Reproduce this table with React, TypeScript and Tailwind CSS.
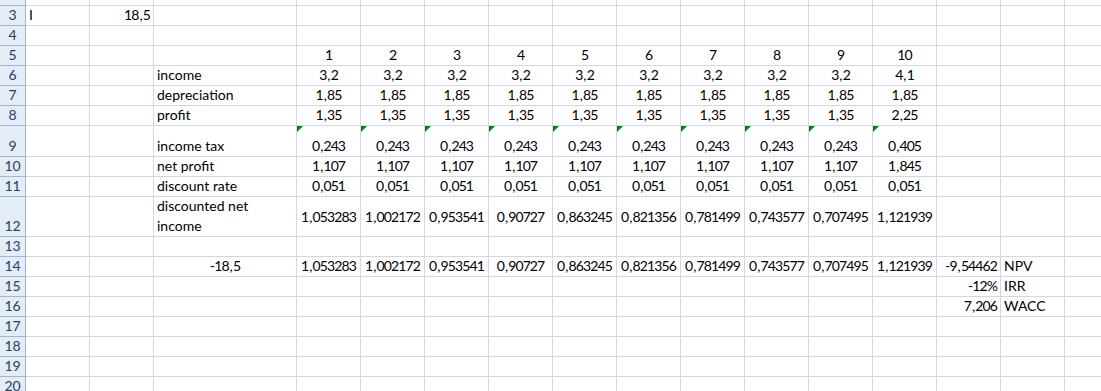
import React from "react";

// Spreadsheet view: rows 2–20, columns A–P, scrolled so row 2 is mostly hidden.

type Align = "l" | "c" | "r";
type VAlign = "b" | "m";

interface CellData {
  t: string;
  a?: Align;
  v?: VAlign;
  tri?: boolean;
  wrap?: boolean;
}

const COL_W = [
  "w-[64px]", "w-[64px]", "w-[143px]",
  "w-[64px]", "w-[64px]", "w-[64px]", "w-[64px]", "w-[64px]", "w-[64px]", "w-[64px]",
  "w-[64px]", "w-[64px]", "w-[64px]", "w-[64px]", "w-[64px]", "w-[64px]",
];

const D = 3; // column D index

const discounted = [
  "1,053283", "1,002172", "0,953541", "0,90727", "0,863245",
  "0,821356", "0,781499", "0,743577", "0,707495", "1,121939",
];

function series(values: string[], extra?: Partial<CellData>): Record<number, CellData> {
  const out: Record<number, CellData> = {};
  values.forEach((t, i) => {
    out[D + i] = { t, a: "c", ...extra };
  });
  return out;
}

function rep(v: string, n: number) {
  return Array.from({ length: n }, () => v);
}

const ROWS: { n: number; h: string; cells: Record<number, CellData> }[] = [
  { n: 2, h: "h-[20px]", cells: {} },
  { n: 3, h: "h-[20px]", cells: { 0: { t: "I", a: "l" }, 1: { t: "18,5", a: "r" } } },
  { n: 4, h: "h-[20px]", cells: {} },
  { n: 5, h: "h-[20px]", cells: series(["1", "2", "3", "4", "5", "6", "7", "8", "9", "10"]) },
  { n: 6, h: "h-[20px]", cells: { 2: { t: "income" }, ...series([...rep("3,2", 9), "4,1"]) } },
  { n: 7, h: "h-[20px]", cells: { 2: { t: "depreciation" }, ...series(rep("1,85", 10)) } },
  { n: 8, h: "h-[20px]", cells: { 2: { t: "profit" }, ...series([...rep("1,35", 9), "2,25"]) } },
  {
    n: 9,
    h: "h-[31px]",
    cells: { 2: { t: "income tax" }, ...series([...rep("0,243", 9), "0,405"], { tri: true }) },
  },
  { n: 10, h: "h-[20px]", cells: { 2: { t: "net profit" }, ...series([...rep("1,107", 9), "1,845"]) } },
  { n: 11, h: "h-[20px]", cells: { 2: { t: "discount rate" }, ...series(rep("0,051", 10)) } },
  {
    n: 12,
    h: "h-[40px]",
    cells: { 2: { t: "discounted net income", wrap: true }, ...series(discounted, { v: "m" }) },
  },
  { n: 13, h: "h-[20px]", cells: {} },
  {
    n: 14,
    h: "h-[20px]",
    cells: {
      2: { t: "-18,5", a: "c" },
      ...series(discounted),
      13: { t: "-9,54462", a: "r" },
      14: { t: "NPV" },
    },
  },
  { n: 15, h: "h-[20px]", cells: { 13: { t: "-12%", a: "r" }, 14: { t: "IRR" } } },
  { n: 16, h: "h-[20px]", cells: { 13: { t: "7,206", a: "r" }, 14: { t: "WACC" } } },
  { n: 17, h: "h-[20px]", cells: {} },
  { n: 18, h: "h-[20px]", cells: {} },
  { n: 19, h: "h-[20px]", cells: {} },
  { n: 20, h: "h-[20px]", cells: {} },
];

const isNumber = (t: string) => /^[-\d,%]+$/.test(t);

// Calibri digits are narrower than Lato's: tighten digits, keep the comma airy.
function NumText({ t }: { t: string }) {
  const parts = t.split(",");
  return (
    <span className="tracking-[-0.9px]">
      {parts.map((p, i) => (
        <React.Fragment key={i}>
          {i > 0 && <span className="ml-[1px] mr-[1px]">,</span>}
          {p}
        </React.Fragment>
      ))}
    </span>
  );
}

function Cell({ w, data }: { w: string; data?: CellData }) {
  const align = data?.a ?? "l";
  const v = data?.v ?? "b";
  return (
    <div
      className={`relative shrink-0 ${w} h-full border-r border-b border-[#d0d7e5] flex ${
        v === "m" ? "items-center" : "items-end"
      } ${align === "c" ? "justify-center" : align === "r" ? "justify-end pr-[3px]" : "justify-start pl-[3px]"}`}
    >
      {data?.tri && (
        <span className="absolute top-0 left-0 w-0 h-0 border-t-[6px] border-t-[#008000] border-r-[6px] border-r-transparent" />
      )}
      {data && (
        <span
          className={`leading-[20px] text-black ${
            data.wrap ? "whitespace-normal w-[110px]" : "whitespace-nowrap"
          }`}
        >
          {isNumber(data.t) ? <NumText t={data.t} /> : data.t}
        </span>
      )}
    </div>
  );
}

export default function App() {
  return (
    <div
      className="w-[1101px] h-[391px] overflow-hidden bg-white text-[14px]"
      style={{ fontFamily: "Lato, 'Open Sans', sans-serif" }}
    >
      <div className="-mt-[14px]">
        {ROWS.map((row) => (
          <div key={row.n} className={`flex ${row.h}`}>
            <div className="shrink-0 w-[26px] h-full bg-[#e4ecf7] border-r border-b border-[#9eb6ce] flex items-end justify-center text-[#27415f] leading-[20px]">
              {row.n}
            </div>
            {COL_W.map((w, i) => (
              <Cell key={i} w={w} data={row.cells[i]} />
            ))}
          </div>
        ))}
      </div>
    </div>
  );
}
